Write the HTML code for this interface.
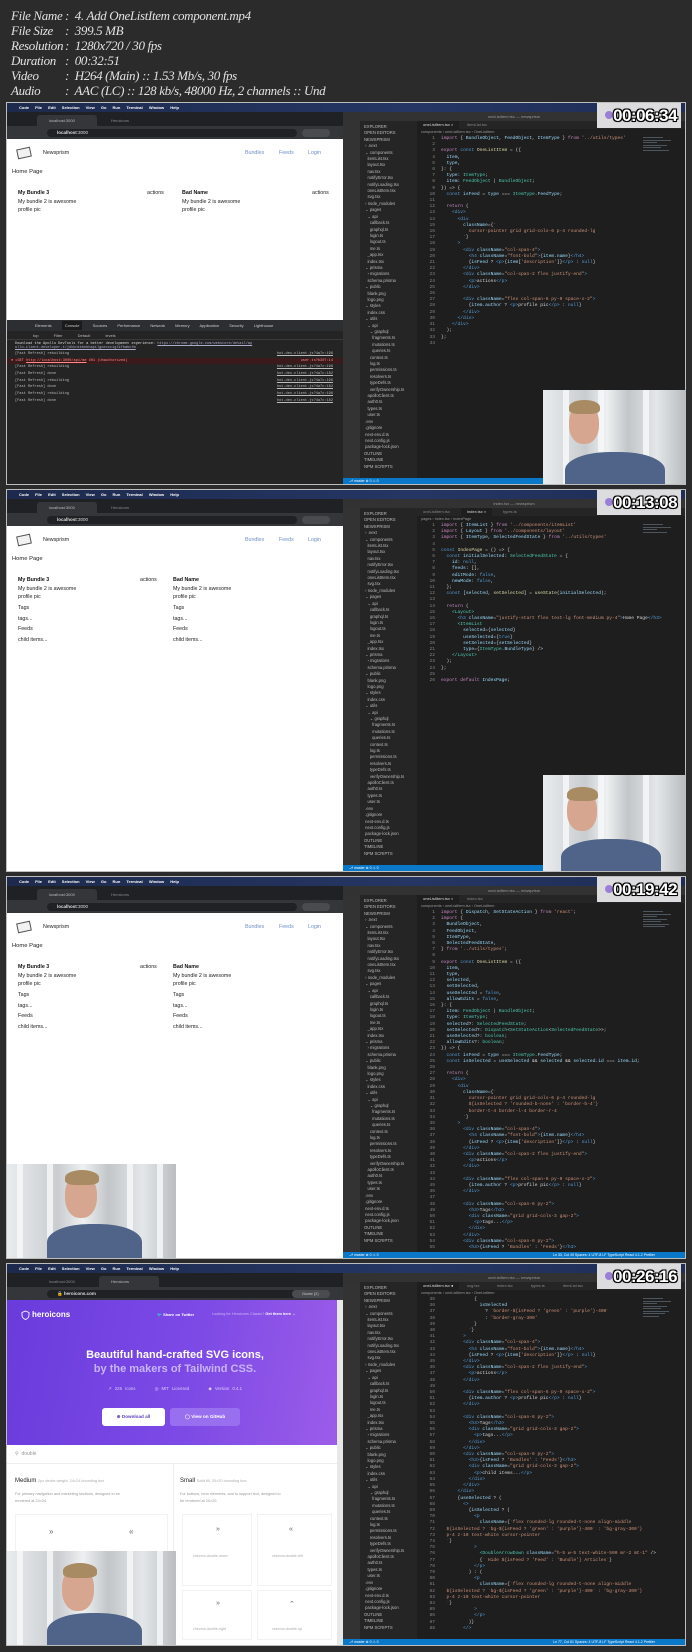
<!DOCTYPE html>
<html><head><meta charset="utf-8">
<style>
*{margin:0;padding:0;box-sizing:border-box}
body{width:692px;height:1652px;background:#2b2b2b;position:relative;overflow:hidden;font-family:"Liberation Sans",sans-serif}
.hdr{position:absolute;left:11px;top:8px;font-family:"Liberation Serif",serif;font-style:italic;color:#e2e2e2;font-size:13px;letter-spacing:-0.35px;line-height:15px}
.hdr div{white-space:pre}
.hdr b{font-weight:normal;display:inline-block;width:54px}
.f{position:absolute;left:7px;width:678px;height:381px;background:#1e1e1e;outline:1px solid #bdbdbd;overflow:hidden}
.a{position:absolute}
.menu{left:0;top:0;width:678px;height:9px;background:linear-gradient(90deg,#1d2a4d,#253664 60%,#1f2d55);color:#fff;font-size:4px;line-height:9px;padding-left:12px;word-spacing:5px;font-weight:bold}
.tabs{left:0;top:9px;width:336px;height:14px;background:#202124}
.tab{top:3px;height:11px;background:#35363a;border-radius:3px 3px 0 0;color:#bbb;font-size:4px;line-height:11px;padding-left:12px}
.addr{left:0;top:23px;width:336px;height:13px;background:#35363a}
.url{left:40px;top:3px;width:250px;height:8px;border-radius:4px;background:#202124;color:#ddd;font-size:4.5px;line-height:8px;padding-left:10px}
.page{left:0;top:36px;width:336px;height:345px;background:#fff;overflow:hidden}
.vs{left:336px;top:9px;width:342px;height:372px;background:#1e1e1e;overflow:hidden}
.vtitle{left:0;top:0;width:342px;height:9px;background:#323233;color:#999;font-size:4px;line-height:9px;text-align:center}
.dots{left:4px;top:3px;width:20px;height:4px}
.dots i{display:inline-block;width:4px;height:4px;border-radius:2px;margin-right:2px}
.act{left:0;top:9px;width:17px;height:363px;background:#333}
.side{left:17px;top:9px;width:57px;height:363px;background:#252526;color:#bbb;font-size:4.2px;line-height:6.4px;padding:3px 0 0 4px;white-space:pre;font-family:"Liberation Sans",sans-serif}
.etabs{left:74px;top:9px;width:268px;height:8px;background:#252526}
.etab{top:0;height:8px;background:#1e1e1e;color:#ddd;font-size:4px;line-height:8px;padding:0 6px}
.crumb{left:74px;top:18px;color:#999;font-size:3.8px;padding-left:4px}
.code{left:80px;top:24px;font-family:"Liberation Mono",monospace;font-size:4.6px;line-height:6.2px;color:#d4d4d4;white-space:pre}
.code .n{color:#858585;display:inline-block;width:12px;text-align:right;margin-right:6px}
.k{color:#569cd6}.s{color:#ce9178}.v{color:#9cdcfe}.t{color:#4ec9b0}.p{color:#c586c0}.y{color:#dcdcaa}
.mini{left:300px;top:24px;width:34px;height:40px}
.mini i{display:block;height:1.3px;margin:1.2px 0;background:#6c7a8a;opacity:.6}
.status{left:0;bottom:0;width:342px;height:6px;background:#0a78c8;color:#fff;font-size:3.5px;line-height:6px;padding-left:6px}
.logo{left:590px;top:0;width:84px;height:25px;background:#dcdcdf}
.logo i{position:absolute;left:8px;top:8px;width:8px;height:8px;border-radius:4px;background:#9b7fd6}
.ts{left:606px;top:3px;font-size:17px;font-weight:bold;color:#fff;letter-spacing:-.5px;text-shadow:-1px -1px 0 #000,1px -1px 0 #000,-1px 1px 0 #000,1px 1px 0 #000,0 0 2px #000}
.cam{overflow:hidden;background:linear-gradient(90deg,#e9ecee,#c9cdd0 30%,#eef0f1 45%,#c2c6c9 60%,#e4e7e9 80%,#b9bdc0)}
.cam .w{position:absolute;top:0;width:6px;height:100%;background:#f8f9fa;opacity:.8}
.cam .body{position:absolute;border-radius:45% 45% 0 0;background:#4f6488}
.cam .head{position:absolute;border-radius:45%;background:#d6a690}
.cam .hair{position:absolute;border-radius:50% 50% 30% 30%;background:#a88b62}
.np{font-size:5.3px;color:#222;line-height:8.6px}
.np b{color:#111}
</style></head><body>

<div class="hdr">
<div><b>File Name</b>:  4. Add OneListItem component.mp4</div>
<div><b>File Size</b>:  399.5 MB</div>
<div><b>Resolution</b>:  1280x720 / 30 fps</div>
<div><b>Duration</b>:  00:32:51</div>
<div><b>Video</b>:  H264 (Main) :: 1.53 Mb/s, 30 fps</div>
<div><b>Audio</b>:  AAC (LC) :: 128 kb/s, 48000 Hz, 2 channels :: Und</div>
</div>

<!-- FRAME 1 -->
<div class="f" style="top:103px">
 <div class="a menu"> Code  File  Edit  Selection  View  Go  Run  Terminal  Window  Help</div>
 <div class="a tabs"><div class="a tab" style="left:30px;width:60px">localhost:3000</div><div class="a tab" style="left:92px;width:60px;background:none;color:#888">Heroicons</div></div>
 <div class="a addr"><div class="a url"><b>localhost</b>:3000</div><div class="a" style="left:295px;top:3px;width:28px;height:8px;border-radius:4px;background:#4a4b4f"></div></div>
 <div class="a page np">
  <div class="a" style="left:10px;top:9px;width:14px;height:10px;border:1px solid #555;transform:rotate(-12deg);background:#f2f2f2"></div>
  <div class="a" style="left:36px;top:10px">Newsprism</div>
  <div class="a" style="left:238px;top:10px;color:#6e8fc4">Bundles</div>
  <div class="a" style="left:272px;top:10px;color:#6e8fc4">Feeds</div>
  <div class="a" style="left:301px;top:10px;color:#6e8fc4">Login</div>
  <div class="a" style="left:5px;top:29px;font-size:5.8px">Home Page</div>
  <div class="a" style="left:11px;top:50px"><b>My Bundle 3</b><br>My bundle 2 is awesome<br>profile pic</div>
  <div class="a" style="left:140px;top:50px">actions</div>
  <div class="a" style="left:175px;top:50px"><b>Bad Name</b><br>My bundle 2 is awesome<br>profile pic</div>
  <div class="a" style="left:305px;top:50px">actions</div>
  <div class="a" style="left:0;top:181px;width:336px;height:164px;background:#242424;font-family:'Liberation Mono',monospace;font-size:3.6px;color:#bbb;line-height:6.7px">
   <div style="height:11px;background:#2d2e31;color:#ccc;font-family:'Liberation Sans';font-size:4px;line-height:11px;padding-left:28px;word-spacing:9px">Elements <span style="background:#1b1b1b;padding:2px 3px">Console</span> Sources Performance Network Memory Application Security Lighthouse</div>
   <div style="height:9px;border-bottom:1px solid #3a3a3a;font-family:'Liberation Sans';font-size:4px;line-height:9px;padding-left:26px;word-spacing:14px">top Filter Default levels</div>
   <div style="padding-left:8px;line-height:4.4px;padding-top:2px;color:#ddd">Download the Apollo DevTools for a better development experience: <u style="color:#aac">https://chrome.google.com/webstore/detail/ap</u><br><u style="color:#aac">ollo-client-developer-t/jdkknkkbebbapilgoeccciglkfbmbnfm</u></div>
   <div style="padding-left:8px">[Fast Refresh] rebuilding<span style="float:right;margin-right:10px;text-decoration:underline">hot-dev-client.js?4a7c:196</span></div>
   <div style="padding-left:4px;background:#3a1a1a;color:#f88">● ▸GET <u>http://localhost:3000/api/me</u> 401 (Unauthorized)<span style="float:right;margin-right:10px">user.ts?b307:14</span></div>
   <div style="padding-left:8px">[Fast Refresh] rebuilding<span style="float:right;margin-right:10px;text-decoration:underline">hot-dev-client.js?4a7c:196</span></div>
   <div style="padding-left:8px">[Fast Refresh] done<span style="float:right;margin-right:10px;text-decoration:underline">hot-dev-client.js?4a7c:182</span></div>
   <div style="padding-left:8px">[Fast Refresh] rebuilding<span style="float:right;margin-right:10px;text-decoration:underline">hot-dev-client.js?4a7c:196</span></div>
   <div style="padding-left:8px">[Fast Refresh] done<span style="float:right;margin-right:10px;text-decoration:underline">hot-dev-client.js?4a7c:182</span></div>
   <div style="padding-left:8px">[Fast Refresh] rebuilding<span style="float:right;margin-right:10px;text-decoration:underline">hot-dev-client.js?4a7c:196</span></div>
   <div style="padding-left:8px">[Fast Refresh] done<span style="float:right;margin-right:10px;text-decoration:underline">hot-dev-client.js?4a7c:182</span></div>
  </div>
 </div>
 <div class="a vs">
  <div class="a vtitle">oneListItem.tsx — newsprism</div>
  <div class="a dots"><i style="background:#ff5f57"></i><i style="background:#febc2e"></i><i style="background:#28c840"></i></div>
  <div class="a act"></div>
  <div class="a side">EXPLORER
OPEN EDITORS
NEWSPRISM
 › .next
 ⌄ components
   itemList.tsx
   layout.tsx
   nav.tsx
   notifyError.tsx
   notifyLoading.tsx
   oneListItem.tsx
   svg.tsx
 › node_modules
 ⌄ pages
   ⌄ api
     callback.ts
     graphql.ts
     login.ts
     logout.ts
     me.ts
   _app.tsx
   index.tsx
 ⌄ prisma
   › migrations
   schema.prisma
 ⌄ public
   blank.png
   logo.png
 ⌄ styles
   index.css
 ⌄ utils
   ⌄ api
     ⌄ graphql
       fragments.ts
       mutations.ts
       queries.ts
     context.ts
     log.ts
     permissions.ts
     resolvers.ts
     typeDefs.ts
     verifyOwnership.ts
   apolloClient.ts
   auth0.ts
   types.ts
   user.ts
 .env
 .gitignore
 next-env.d.ts
 next.config.js
 package-lock.json
OUTLINE
TIMELINE
NPM SCRIPTS</div>
  <div class="a etabs"><div class="a etab" style="left:0">oneListItem.tsx ×</div><div class="a etab" style="left:44px;background:none;color:#888">itemList.tsx</div></div>
  <div class="a crumb">components › oneListItem.tsx › OneListItem</div>
  <div class="a code"><span class="n">1</span><span class="p">import</span> { <span class="v">BundleObject</span>, <span class="v">FeedObject</span>, <span class="v">ItemType</span> } <span class="p">from</span> <span class="s">'../utils/types'</span>
<span class="n">2</span>
<span class="n">3</span><span class="p">export</span> <span class="k">const</span> <span class="y">OneListItem</span> = ({
<span class="n">4</span>  <span class="v">item</span>,
<span class="n">5</span>  <span class="v">type</span>,
<span class="n">6</span>}: {
<span class="n">7</span>  <span class="v">type</span>: <span class="t">ItemType</span>;
<span class="n">8</span>  <span class="v">item</span>: <span class="t">FeedObject</span> | <span class="t">BundleObject</span>;
<span class="n">9</span>}) =&gt; {
<span class="n">10</span>  <span class="k">const</span> <span class="v">isFeed</span> = <span class="v">type</span> === <span class="t">ItemType</span>.<span class="v">FeedType</span>;
<span class="n">11</span>
<span class="n">12</span>  <span class="p">return</span> (
<span class="n">13</span>    <span class="k">&lt;div&gt;</span>
<span class="n">14</span>      <span class="k">&lt;div</span>
<span class="n">15</span>        <span class="v">className</span>={`
<span class="n">16</span>          <span class="s">cursor-pointer grid grid-cols-6 p-4 rounded-lg</span>
<span class="n">17</span>        `}
<span class="n">18</span>      <span class="k">&gt;</span>
<span class="n">19</span>        <span class="k">&lt;div</span> <span class="v">className</span>=<span class="s">"col-span-4"</span><span class="k">&gt;</span>
<span class="n">20</span>          <span class="k">&lt;h4</span> <span class="v">className</span>=<span class="s">"font-bold"</span><span class="k">&gt;</span>{<span class="v">item</span>.<span class="v">name</span>}<span class="k">&lt;/h4&gt;</span>
<span class="n">21</span>          {<span class="v">isFeed</span> ? <span class="k">&lt;p&gt;</span>{<span class="v">item</span>[<span class="s">'description'</span>]}<span class="k">&lt;/p&gt;</span> : <span class="k">null</span>}
<span class="n">22</span>        <span class="k">&lt;/div&gt;</span>
<span class="n">23</span>        <span class="k">&lt;div</span> <span class="v">className</span>=<span class="s">"col-span-2 flex justify-end"</span><span class="k">&gt;</span>
<span class="n">24</span>          <span class="k">&lt;p&gt;</span>actions<span class="k">&lt;/p&gt;</span>
<span class="n">25</span>        <span class="k">&lt;/div&gt;</span>
<span class="n">26</span>
<span class="n">27</span>        <span class="k">&lt;div</span> <span class="v">className</span>=<span class="s">"flex col-span-6 py-0 space-x-2"</span><span class="k">&gt;</span>
<span class="n">28</span>          {<span class="v">item</span>.<span class="v">author</span> ? <span class="k">&lt;p&gt;</span>profile pic<span class="k">&lt;/p&gt;</span> : <span class="k">null</span>}
<span class="n">29</span>        <span class="k">&lt;/div&gt;</span>
<span class="n">30</span>      <span class="k">&lt;/div&gt;</span>
<span class="n">31</span>    <span class="k">&lt;/div&gt;</span>
<span class="n">32</span>  );
<span class="n">33</span>};
<span class="n">34</span></div>
  <div class="a mini"><i style="width:20px"></i><i style="width:28px"></i><i style="width:14px"></i><i style="width:24px"></i><i style="width:18px"></i><i style="width:26px"></i></div>
  <div class="a status">⎇ master  ⊗ 0 ⚠ 0</div>
 </div>
 <div class="a cam" style="left:536px;top:287px;width:142px;height:94px">
  <div class="w" style="left:20px"></div><div class="w" style="left:55px"></div><div class="w" style="left:100px"></div>
  <div class="body" style="left:22px;top:62px;width:100px;height:40px"></div>
  <div class="head" style="left:26px;top:14px;width:30px;height:40px"></div>
  <div class="hair" style="left:26px;top:10px;width:31px;height:14px"></div>
 </div>
 <div class="a logo"><i></i></div>
 <div class="a ts">00:06:34</div>
</div>

<!-- FRAME 2 -->
<div class="f" style="top:490px">
 <div class="a menu"> Code  File  Edit  Selection  View  Go  Run  Terminal  Window  Help</div>
 <div class="a tabs"><div class="a tab" style="left:30px;width:60px">localhost:3000</div><div class="a tab" style="left:92px;width:60px;background:none;color:#888">Heroicons</div></div>
 <div class="a addr"><div class="a url"><b>localhost</b>:3000</div><div class="a" style="left:295px;top:3px;width:28px;height:8px;border-radius:4px;background:#4a4b4f"></div></div>
 <div class="a page np">
  <div class="a" style="left:10px;top:9px;width:14px;height:10px;border:1px solid #555;transform:rotate(-12deg);background:#f2f2f2"></div>
  <div class="a" style="left:36px;top:10px">Newsprism</div>
  <div class="a" style="left:238px;top:10px;color:#6e8fc4">Bundles</div>
  <div class="a" style="left:272px;top:10px;color:#6e8fc4">Feeds</div>
  <div class="a" style="left:301px;top:10px;color:#6e8fc4">Login</div>
  <div class="a" style="left:5px;top:29px;font-size:5.8px">Home Page</div>
  <div class="a" style="left:11px;top:50px"><b>My Bundle 3</b><br>My bundle 2 is awesome<br>profile pic<br><span style="line-height:13px">Tags</span><br>tags...<br><span style="line-height:13px">Feeds</span><br>child items...</div>
  <div class="a" style="left:133px;top:50px">actions</div>
  <div class="a" style="left:166px;top:50px"><b>Bad Name</b><br>My bundle 2 is awesome<br>profile pic<br><span style="line-height:13px">Tags</span><br>tags...<br><span style="line-height:13px">Feeds</span><br>child items...</div>
 </div>
 <div class="a vs">
  <div class="a vtitle">index.tsx — newsprism</div>
  <div class="a dots"><i style="background:#ff5f57"></i><i style="background:#febc2e"></i><i style="background:#28c840"></i></div>
  <div class="a act"></div>
  <div class="a side">EXPLORER
OPEN EDITORS
NEWSPRISM
 › .next
 ⌄ components
   itemList.tsx
   layout.tsx
   nav.tsx
   notifyError.tsx
   notifyLoading.tsx
   oneListItem.tsx
   svg.tsx
 › node_modules
 ⌄ pages
   ⌄ api
     callback.ts
     graphql.ts
     login.ts
     logout.ts
     me.ts
   _app.tsx
   index.tsx
 ⌄ prisma
   › migrations
   schema.prisma
 ⌄ public
   blank.png
   logo.png
 ⌄ styles
   index.css
 ⌄ utils
   ⌄ api
     ⌄ graphql
       fragments.ts
       mutations.ts
       queries.ts
     context.ts
     log.ts
     permissions.ts
     resolvers.ts
     typeDefs.ts
     verifyOwnership.ts
   apolloClient.ts
   auth0.ts
   types.ts
   user.ts
 .env
 .gitignore
 next-env.d.ts
 next.config.js
 package-lock.json
OUTLINE
TIMELINE
NPM SCRIPTS</div>
  <div class="a etabs"><div class="a etab" style="left:0;background:none;color:#888">oneListItem.tsx</div><div class="a etab" style="left:44px">index.tsx ×</div><div class="a etab" style="left:80px;background:none;color:#888">types.ts</div></div>
  <div class="a crumb">pages › index.tsx › IndexPage</div>
  <div class="a code"><span class="n">1</span><span class="p">import</span> { <span class="v">ItemList</span> } <span class="p">from</span> <span class="s">'../components/itemList'</span>
<span class="n">2</span><span class="p">import</span> { <span class="v">Layout</span> } <span class="p">from</span> <span class="s">'../components/layout'</span>
<span class="n">3</span><span class="p">import</span> { <span class="v">ItemType</span>, <span class="v">SelectedFeedState</span> } <span class="p">from</span> <span class="s">'../utils/types'</span>
<span class="n">4</span>
<span class="n">5</span><span class="k">const</span> <span class="y">IndexPage</span> = () =&gt; {
<span class="n">6</span>  <span class="k">const</span> <span class="v">initialSelected</span>: <span class="t">SelectedFeedState</span> = {
<span class="n">7</span>    <span class="v">id</span>: <span class="k">null</span>,
<span class="n">8</span>    <span class="v">feeds</span>: [],
<span class="n">9</span>    <span class="v">editMode</span>: <span class="k">false</span>,
<span class="n">10</span>    <span class="v">newMode</span>: <span class="k">false</span>,
<span class="n">11</span>  };
<span class="n">12</span>  <span class="k">const</span> [<span class="v">selected</span>, <span class="y">setSelected</span>] = <span class="y">useState</span>(<span class="v">initialSelected</span>);
<span class="n">13</span>
<span class="n">14</span>  <span class="p">return</span> (
<span class="n">15</span>    <span class="t">&lt;Layout&gt;</span>
<span class="n">16</span>      <span class="k">&lt;h3</span> <span class="v">className</span>=<span class="s">"justify-start flex text-lg font-medium py-4"</span><span class="k">&gt;</span>Home Page<span class="k">&lt;/h3&gt;</span>
<span class="n">17</span>      <span class="t">&lt;ItemList</span>
<span class="n">18</span>        <span class="v">selected</span>={<span class="v">selected</span>}
<span class="n">19</span>        <span class="v">useSelected</span>={<span class="k">true</span>}
<span class="n">20</span>        <span class="v">setSelected</span>={<span class="v">setSelected</span>}
<span class="n">21</span>        <span class="v">type</span>={<span class="t">ItemType</span>.<span class="v">BundleType</span>} /&gt;
<span class="n">22</span>    <span class="t">&lt;/Layout&gt;</span>
<span class="n">23</span>  );
<span class="n">24</span>};
<span class="n">25</span>
<span class="n">26</span><span class="p">export default</span> <span class="v">IndexPage</span>;</div>
  <div class="a mini"><i style="width:20px"></i><i style="width:28px"></i><i style="width:14px"></i><i style="width:24px"></i></div>
  <div class="a status">⎇ master  ⊗ 0 ⚠ 0</div>
 </div>
 <div class="a cam" style="left:536px;top:285px;width:142px;height:96px">
  <div class="w" style="left:20px"></div><div class="w" style="left:55px"></div><div class="w" style="left:100px"></div>
  <div class="body" style="left:18px;top:64px;width:100px;height:40px"></div>
  <div class="head" style="left:24px;top:16px;width:30px;height:40px"></div>
  <div class="hair" style="left:24px;top:12px;width:31px;height:14px"></div>
 </div>
 <div class="a logo"><i></i></div>
 <div class="a ts">00:13:08</div>
</div>

<!-- FRAME 3 -->
<div class="f" style="top:877px">
 <div class="a menu"> Code  File  Edit  Selection  View  Go  Run  Terminal  Window  Help</div>
 <div class="a tabs"><div class="a tab" style="left:30px;width:60px">localhost:3000</div><div class="a tab" style="left:92px;width:60px;background:none;color:#888">Heroicons</div></div>
 <div class="a addr"><div class="a url"><b>localhost</b>:3000</div><div class="a" style="left:295px;top:3px;width:28px;height:8px;border-radius:4px;background:#4a4b4f"></div></div>
 <div class="a page np">
  <div class="a" style="left:10px;top:9px;width:14px;height:10px;border:1px solid #555;transform:rotate(-12deg);background:#f2f2f2"></div>
  <div class="a" style="left:36px;top:10px">Newsprism</div>
  <div class="a" style="left:238px;top:10px;color:#6e8fc4">Bundles</div>
  <div class="a" style="left:272px;top:10px;color:#6e8fc4">Feeds</div>
  <div class="a" style="left:301px;top:10px;color:#6e8fc4">Login</div>
  <div class="a" style="left:5px;top:29px;font-size:5.8px">Home Page</div>
  <div class="a" style="left:11px;top:50px"><b>My Bundle 3</b><br>My bundle 2 is awesome<br>profile pic<br><span style="line-height:13px">Tags</span><br>tags...<br><span style="line-height:13px">Feeds</span><br>child items...</div>
  <div class="a" style="left:133px;top:50px">actions</div>
  <div class="a" style="left:166px;top:50px"><b>Bad Name</b><br>My bundle 2 is awesome<br>profile pic<br><span style="line-height:13px">Tags</span><br>tags...<br><span style="line-height:13px">Feeds</span><br>child items...</div>
 </div>
 <div class="a vs">
  <div class="a vtitle">oneListItem.tsx — newsprism</div>
  <div class="a dots"><i style="background:#ff5f57"></i><i style="background:#febc2e"></i><i style="background:#28c840"></i></div>
  <div class="a act"></div>
  <div class="a side">EXPLORER
OPEN EDITORS
NEWSPRISM
 › .next
 ⌄ components
   itemList.tsx
   layout.tsx
   nav.tsx
   notifyError.tsx
   notifyLoading.tsx
   oneListItem.tsx
   svg.tsx
 › node_modules
 ⌄ pages
   ⌄ api
     callback.ts
     graphql.ts
     login.ts
     logout.ts
     me.ts
   _app.tsx
   index.tsx
 ⌄ prisma
   › migrations
   schema.prisma
 ⌄ public
   blank.png
   logo.png
 ⌄ styles
   index.css
 ⌄ utils
   ⌄ api
     ⌄ graphql
       fragments.ts
       mutations.ts
       queries.ts
     context.ts
     log.ts
     permissions.ts
     resolvers.ts
     typeDefs.ts
     verifyOwnership.ts
   apolloClient.ts
   auth0.ts
   types.ts
   user.ts
 .env
 .gitignore
 next-env.d.ts
 next.config.js
 package-lock.json
OUTLINE
TIMELINE
NPM SCRIPTS</div>
  <div class="a etabs"><div class="a etab" style="left:0">oneListItem.tsx ×</div><div class="a etab" style="left:44px;background:none;color:#888">index.tsx</div></div>
  <div class="a crumb">components › oneListItem.tsx › OneListItem</div>
  <div class="a code"><span class="n">1</span><span class="p">import</span> { <span class="v">Dispatch</span>, <span class="v">SetStateAction</span> } <span class="p">from</span> <span class="s">'react'</span>;
<span class="n">2</span><span class="p">import</span> {
<span class="n">3</span>  <span class="v">BundleObject</span>,
<span class="n">4</span>  <span class="v">FeedObject</span>,
<span class="n">5</span>  <span class="v">ItemType</span>,
<span class="n">6</span>  <span class="v">SelectedFeedState</span>,
<span class="n">7</span>} <span class="p">from</span> <span class="s">'../utils/types'</span>;
<span class="n">8</span>
<span class="n">9</span><span class="p">export</span> <span class="k">const</span> <span class="y">OneListItem</span> = ({
<span class="n">10</span>  <span class="v">item</span>,
<span class="n">11</span>  <span class="v">type</span>,
<span class="n">12</span>  <span class="v">selected</span>,
<span class="n">13</span>  <span class="v">setSelected</span>,
<span class="n">14</span>  <span class="v">useSelected</span> = <span class="k">false</span>,
<span class="n">15</span>  <span class="v">allowEdits</span> = <span class="k">false</span>,
<span class="n">16</span>}: {
<span class="n">17</span>  <span class="v">item</span>: <span class="t">FeedObject</span> | <span class="t">BundleObject</span>;
<span class="n">18</span>  <span class="v">type</span>: <span class="t">ItemType</span>;
<span class="n">19</span>  <span class="v">selected</span>?: <span class="t">SelectedFeedState</span>;
<span class="n">20</span>  <span class="v">setSelected</span>?: <span class="t">Dispatch</span>&lt;<span class="t">SetStateAction</span>&lt;<span class="t">SelectedFeedState</span>&gt;&gt;;
<span class="n">21</span>  <span class="v">useSelected</span>?: <span class="t">boolean</span>;
<span class="n">22</span>  <span class="v">allowEdits</span>?: <span class="t">boolean</span>;
<span class="n">23</span>}) =&gt; {
<span class="n">24</span>  <span class="k">const</span> <span class="v">isFeed</span> = <span class="v">type</span> === <span class="t">ItemType</span>.<span class="v">FeedType</span>;
<span class="n">25</span>  <span class="k">const</span> <span class="v">isSelected</span> = <span class="v">useSelected</span> &amp;&amp; <span class="v">selected</span> &amp;&amp; <span class="v">selected</span>.<span class="v">id</span> === <span class="v">item</span>.<span class="v">id</span>;
<span class="n">26</span>
<span class="n">27</span>  <span class="p">return</span> (
<span class="n">28</span>    <span class="k">&lt;div&gt;</span>
<span class="n">29</span>      <span class="k">&lt;div</span>
<span class="n">30</span>        <span class="v">className</span>={`
<span class="n">31</span>          <span class="s">cursor-pointer grid grid-cols-6 p-4 rounded-lg</span>
<span class="n">32</span>          <span class="s">${isSelected ? 'rounded-b-none' : 'border-b-4'}</span>
<span class="n">33</span>          <span class="s">border-t-4 border-l-4 border-r-4</span>
<span class="n">34</span>        `}
<span class="n">35</span>      <span class="k">&gt;</span>
<span class="n">36</span>        <span class="k">&lt;div</span> <span class="v">className</span>=<span class="s">"col-span-4"</span><span class="k">&gt;</span>
<span class="n">37</span>          <span class="k">&lt;h4</span> <span class="v">className</span>=<span class="s">"font-bold"</span><span class="k">&gt;</span>{<span class="v">item</span>.<span class="v">name</span>}<span class="k">&lt;/h4&gt;</span>
<span class="n">38</span>          {<span class="v">isFeed</span> ? <span class="k">&lt;p&gt;</span>{<span class="v">item</span>[<span class="s">'description'</span>]}<span class="k">&lt;/p&gt;</span> : <span class="k">null</span>}
<span class="n">39</span>        <span class="k">&lt;/div&gt;</span>
<span class="n">40</span>        <span class="k">&lt;div</span> <span class="v">className</span>=<span class="s">"col-span-2 flex justify-end"</span><span class="k">&gt;</span>
<span class="n">41</span>          <span class="k">&lt;p&gt;</span>actions<span class="k">&lt;/p&gt;</span>
<span class="n">42</span>        <span class="k">&lt;/div&gt;</span>
<span class="n">43</span>
<span class="n">44</span>        <span class="k">&lt;div</span> <span class="v">className</span>=<span class="s">"flex col-span-6 py-0 space-x-2"</span><span class="k">&gt;</span>
<span class="n">45</span>          {<span class="v">item</span>.<span class="v">author</span> ? <span class="k">&lt;p&gt;</span>profile pic<span class="k">&lt;/p&gt;</span> : <span class="k">null</span>}
<span class="n">46</span>        <span class="k">&lt;/div&gt;</span>
<span class="n">47</span>
<span class="n">48</span>        <span class="k">&lt;div</span> <span class="v">className</span>=<span class="s">"col-span-6 py-2"</span><span class="k">&gt;</span>
<span class="n">49</span>          <span class="k">&lt;h3&gt;</span>Tags<span class="k">&lt;/h3&gt;</span>
<span class="n">50</span>          <span class="k">&lt;div</span> <span class="v">className</span>=<span class="s">"grid grid-cols-3 gap-2"</span><span class="k">&gt;</span>
<span class="n">51</span>            <span class="k">&lt;p&gt;</span>tags...<span class="k">&lt;/p&gt;</span>
<span class="n">52</span>          <span class="k">&lt;/div&gt;</span>
<span class="n">53</span>        <span class="k">&lt;/div&gt;</span>
<span class="n">54</span>        <span class="k">&lt;div</span> <span class="v">className</span>=<span class="s">"col-span-6 py-2"</span><span class="k">&gt;</span>
<span class="n">55</span>          <span class="k">&lt;h3&gt;</span>{<span class="v">isFeed</span> ? <span class="s">'Bundles'</span> : <span class="s">'Feeds'</span>}<span class="k">&lt;/h3&gt;</span></div>
  <div class="a mini"><i style="width:20px"></i><i style="width:28px"></i><i style="width:14px"></i><i style="width:24px"></i><i style="width:18px"></i><i style="width:26px"></i><i style="width:22px"></i></div>
  <div class="a status">⎇ master  ⊗ 0 ⚠ 0<span style="float:right;margin-right:30px">Ln 33, Col 49  Spaces: 4  UTF-8  LF  TypeScript React  4.1.2  Prettier</span></div>
 </div>
 <div class="a cam" style="left:0;top:287px;width:169px;height:94px">
  <div class="w" style="left:10px"></div><div class="w" style="left:40px"></div><div class="w" style="left:120px"></div><div class="w" style="left:150px"></div>
  <div class="body" style="left:40px;top:60px;width:95px;height:40px"></div>
  <div class="head" style="left:58px;top:10px;width:32px;height:44px"></div>
  <div class="hair" style="left:58px;top:6px;width:34px;height:15px"></div>
 </div>
 <div class="a logo"><i></i></div>
 <div class="a ts">00:19:42</div>
</div>

<!-- FRAME 4 -->
<div class="f" style="top:1264px">
 <div class="a menu"> Code  File  Edit  Selection  View  Go  Run  Terminal  Window  Help</div>
 <div class="a tabs"><div class="a tab" style="left:30px;width:60px;background:none;color:#888">localhost:3000</div><div class="a tab" style="left:92px;width:60px">Heroicons</div></div>
 <div class="a addr"><div class="a url">🔒 <b>heroicons.com</b></div><div class="a" style="left:285px;top:3px;width:38px;height:8px;border-radius:4px;background:#4a4b4f;color:#ccc;font-size:4px;line-height:8px;padding-left:10px">Guest (2)</div></div>
 <div class="a page" style="font-family:'Liberation Sans',sans-serif">
  <div class="a" style="left:0;top:0;width:336px;height:145px;background:linear-gradient(100deg,#6a3bdc,#7d4ae6 55%,#9d5de8)">
   <svg class="a" style="left:14px;top:10px" width="9" height="10" viewBox="0 0 9 10"><path d="M4.5 1 L8 2.5 V5 C8 7.5 6 9 4.5 9.5 C3 9 1 7.5 1 5 V2.5 Z" fill="none" stroke="#fff" stroke-width="0.9"/></svg>
   <div class="a" style="left:25px;top:10px;color:#fff;font-size:8px;font-weight:bold">heroicons</div>
   <div class="a" style="left:150px;top:12px;color:#fff;font-size:4px;font-weight:bold">🐦 Share on Twitter</div>
   <div class="a" style="left:205px;top:12px;color:#c9b8f5;font-size:3.8px">Looking for Heroicons Classic? <b style="color:#fff">Get them here →</b></div>
   <div class="a" style="left:0;width:336px;top:48px;text-align:center;color:#fff;font-size:11px;font-weight:bold;line-height:14px">Beautiful hand-crafted SVG icons,<br><span style="color:#c8b4fa">by the makers of Tailwind CSS.</span></div>
   <div class="a" style="left:0;width:336px;top:86px;text-align:center;color:#dccff9;font-size:4.3px;word-spacing:2px">↗ 226 Icons &nbsp;&nbsp;&nbsp;&nbsp; ◎ MIT Licensed &nbsp;&nbsp;&nbsp;&nbsp; ◆ Version 0.4.1</div>
   <div class="a" style="left:95px;top:108px;width:63px;height:18px;background:#fff;border-radius:3px;color:#5b3dc0;font-size:4.6px;line-height:18px;text-align:center;font-weight:bold">⊕ Download all</div>
   <div class="a" style="left:163px;top:108px;width:70px;height:18px;background:#9870ef;border-radius:3px;color:#fff;font-size:4.6px;line-height:18px;text-align:center;font-weight:bold">◯ View on GitHub</div>
  </div>
  <div class="a" style="left:8px;top:151px;color:#999;font-size:5px">⚲ &nbsp;double</div>
  <div class="a" style="left:0;top:163px;width:336px;height:1px;background:#eee"></div>
  <div class="a" style="left:166px;top:164px;width:1px;height:190px;background:#eee"></div>
  <div class="a" style="left:8px;top:178px;font-size:6px;color:#222">Medium <span style="font-size:3.8px;color:#aaa">2px stroke weight, 24×24 bounding box</span></div>
  <div class="a" style="left:8px;top:191px;font-size:3.8px;color:#999;line-height:7px">For primary navigation and marketing sections, designed to be<br>rendered at 24×24.</div>
  <div class="a" style="left:173px;top:178px;font-size:6px;color:#222">Small <span style="font-size:3.8px;color:#aaa">Solid fill, 20×20 bounding box</span></div>
  <div class="a" style="left:173px;top:191px;font-size:3.8px;color:#999;line-height:7px">For buttons, form elements, and to support text, designed to<br>be rendered at 20×20.</div>
  <div class="a" style="left:8px;top:214px;width:153px;height:40px;border:1px solid #f2f2f2"></div>
  <div class="a" style="left:42px;top:227px;color:#666;font-size:8px">»</div>
  <div class="a" style="left:122px;top:227px;color:#666;font-size:8px">«</div>
  <div class="a" style="left:175px;top:214px;width:70px;height:72px;border:1px solid #f2f2f2"></div>
  <div class="a" style="left:250px;top:214px;width:75px;height:72px;border:1px solid #f2f2f2"></div>
  <div class="a" style="left:209px;top:226px;color:#666;font-size:7px">»</div>
  <div class="a" style="left:282px;top:226px;color:#666;font-size:7px">«</div>
  <div class="a" style="left:186px;top:254px;color:#aaa;font-size:3.6px">chevron-double-down</div>
  <div class="a" style="left:265px;top:254px;color:#aaa;font-size:3.6px">chevron-double-left</div>
  <div class="a" style="left:175px;top:290px;width:70px;height:50px;border:1px solid #f2f2f2"></div>
  <div class="a" style="left:250px;top:290px;width:75px;height:50px;border:1px solid #f2f2f2"></div>
  <div class="a" style="left:209px;top:300px;color:#666;font-size:7px">»</div>
  <div class="a" style="left:282px;top:300px;color:#666;font-size:7px">⌃</div>
  <div class="a" style="left:186px;top:327px;color:#aaa;font-size:3.6px">chevron-double-right</div>
  <div class="a" style="left:265px;top:327px;color:#aaa;font-size:3.6px">chevron-double-up</div>
  <div class="a" style="left:330px;top:0;width:6px;height:345px;background:#e8e8e8"></div>
 </div>
 <div class="a vs">
  <div class="a vtitle">oneListItem.tsx — newsprism</div>
  <div class="a dots"><i style="background:#ff5f57"></i><i style="background:#febc2e"></i><i style="background:#28c840"></i></div>
  <div class="a act"></div>
  <div class="a side">EXPLORER
OPEN EDITORS
NEWSPRISM
 › .next
 ⌄ components
   itemList.tsx
   layout.tsx
   nav.tsx
   notifyError.tsx
   notifyLoading.tsx
   oneListItem.tsx
   svg.tsx
 › node_modules
 ⌄ pages
   ⌄ api
     callback.ts
     graphql.ts
     login.ts
     logout.ts
     me.ts
   _app.tsx
   index.tsx
 ⌄ prisma
   › migrations
   schema.prisma
 ⌄ public
   blank.png
   logo.png
 ⌄ styles
   index.css
 ⌄ utils
   ⌄ api
     ⌄ graphql
       fragments.ts
       mutations.ts
       queries.ts
     context.ts
     log.ts
     permissions.ts
     resolvers.ts
     typeDefs.ts
     verifyOwnership.ts
   apolloClient.ts
   auth0.ts
   types.ts
   user.ts
 .env
 .gitignore
 next-env.d.ts
 next.config.js
 package-lock.json
OUTLINE
TIMELINE
NPM SCRIPTS</div>
  <div class="a etabs"><div class="a etab" style="left:0">oneListItem.tsx ●</div><div class="a etab" style="left:44px;background:none;color:#888">svg.tsx</div><div class="a etab" style="left:74px;background:none;color:#888">index.tsx</div><div class="a etab" style="left:108px;background:none;color:#888">types.ts</div><div class="a etab" style="left:140px;background:none;color:#888">itemList.tsx</div></div>
  <div class="a crumb">components › oneListItem.tsx › OneListItem</div>
  <div class="a code"><span class="n">35</span>            {
<span class="n">36</span>              <span class="v">isSelected</span>
<span class="n">37</span>                ? <span class="s">`border-${isFeed ? 'green' : 'purple'}-400`</span>
<span class="n">38</span>                : <span class="s">'border-gray-300'</span>
<span class="n">39</span>            }
<span class="n">40</span>          `}
<span class="n">41</span>        <span class="k">&gt;</span>
<span class="n">42</span>        <span class="k">&lt;div</span> <span class="v">className</span>=<span class="s">"col-span-4"</span><span class="k">&gt;</span>
<span class="n">43</span>          <span class="k">&lt;h4</span> <span class="v">className</span>=<span class="s">"font-bold"</span><span class="k">&gt;</span>{<span class="v">item</span>.<span class="v">name</span>}<span class="k">&lt;/h4&gt;</span>
<span class="n">44</span>          {<span class="v">isFeed</span> ? <span class="k">&lt;p&gt;</span>{<span class="v">item</span>[<span class="s">'description'</span>]}<span class="k">&lt;/p&gt;</span> : <span class="k">null</span>}
<span class="n">45</span>        <span class="k">&lt;/div&gt;</span>
<span class="n">46</span>        <span class="k">&lt;div</span> <span class="v">className</span>=<span class="s">"col-span-2 flex justify-end"</span><span class="k">&gt;</span>
<span class="n">47</span>          <span class="k">&lt;p&gt;</span>actions<span class="k">&lt;/p&gt;</span>
<span class="n">48</span>        <span class="k">&lt;/div&gt;</span>
<span class="n">49</span>
<span class="n">50</span>        <span class="k">&lt;div</span> <span class="v">className</span>=<span class="s">"flex col-span-6 py-0 space-x-2"</span><span class="k">&gt;</span>
<span class="n">51</span>          {<span class="v">item</span>.<span class="v">author</span> ? <span class="k">&lt;p&gt;</span>profile pic<span class="k">&lt;/p&gt;</span> : <span class="k">null</span>}
<span class="n">52</span>        <span class="k">&lt;/div&gt;</span>
<span class="n">53</span>
<span class="n">54</span>        <span class="k">&lt;div</span> <span class="v">className</span>=<span class="s">"col-span-6 py-2"</span><span class="k">&gt;</span>
<span class="n">55</span>          <span class="k">&lt;h3&gt;</span>Tags<span class="k">&lt;/h3&gt;</span>
<span class="n">56</span>          <span class="k">&lt;div</span> <span class="v">className</span>=<span class="s">"grid grid-cols-3 gap-2"</span><span class="k">&gt;</span>
<span class="n">57</span>            <span class="k">&lt;p&gt;</span>tags...<span class="k">&lt;/p&gt;</span>
<span class="n">58</span>          <span class="k">&lt;/div&gt;</span>
<span class="n">59</span>        <span class="k">&lt;/div&gt;</span>
<span class="n">60</span>        <span class="k">&lt;div</span> <span class="v">className</span>=<span class="s">"col-span-6 py-2"</span><span class="k">&gt;</span>
<span class="n">61</span>          <span class="k">&lt;h3&gt;</span>{<span class="v">isFeed</span> ? <span class="s">'Bundles'</span> : <span class="s">'Feeds'</span>}<span class="k">&lt;/h3&gt;</span>
<span class="n">62</span>          <span class="k">&lt;div</span> <span class="v">className</span>=<span class="s">"grid grid-cols-3 gap-2"</span><span class="k">&gt;</span>
<span class="n">63</span>            <span class="k">&lt;p&gt;</span>child items...<span class="k">&lt;/p&gt;</span>
<span class="n">64</span>          <span class="k">&lt;/div&gt;</span>
<span class="n">65</span>        <span class="k">&lt;/div&gt;</span>
<span class="n">66</span>      <span class="k">&lt;/div&gt;</span>
<span class="n">67</span>      {<span class="v">useSelected</span> ? (
<span class="n">68</span>        <span class="k">&lt;&gt;</span>
<span class="n">69</span>          {<span class="v">isSelected</span> ? (
<span class="n">70</span>            <span class="k">&lt;p</span>
<span class="n">71</span>              <span class="v">className</span>={<span class="s">`flex rounded-lg rounded-t-none align-middle</span>
<span class="n">72</span><span class="s">  ${isSelected ? `bg-${isFeed ? 'green' : 'purple'}-400` : 'bg-gray-300'}</span>
<span class="n">73</span><span class="s">  p-4 z-10 text-white cursor-pointer</span>
<span class="n">74</span><span class="s">  `</span>}
<span class="n">75</span>            <span class="k">&gt;</span>
<span class="n">76</span>              <span class="t">&lt;DoubleArrowDown</span> <span class="v">className</span>=<span class="s">"h-5 w-5 text-white-500 mr-2 mt-1"</span> /&gt;
<span class="n">77</span>              {<span class="s">` Hide ${isFeed ? 'Feed' : 'Bundle'} Articles`</span>}
<span class="n">78</span>            <span class="k">&lt;/p&gt;</span>
<span class="n">79</span>          ) : (
<span class="n">80</span>            <span class="k">&lt;p</span>
<span class="n">81</span>              <span class="v">className</span>={<span class="s">`flex rounded-lg rounded-t-none align-middle</span>
<span class="n">82</span><span class="s">  ${isSelected ? `bg-${isFeed ? 'green' : 'purple'}-400` : 'bg-gray-300'}</span>
<span class="n">83</span><span class="s">  p-4 z-10 text-white cursor-pointer</span>
<span class="n">84</span><span class="s">  `</span>}
<span class="n">85</span>            <span class="k">&gt;</span>
<span class="n">86</span>            <span class="k">&lt;/p&gt;</span>
<span class="n">87</span>          )}
<span class="n">88</span>        <span class="k">&lt;/&gt;</span></div>
  <div class="a mini"><i style="width:20px"></i><i style="width:28px"></i><i style="width:14px"></i><i style="width:24px"></i><i style="width:18px"></i><i style="width:26px"></i><i style="width:22px"></i><i style="width:16px"></i></div>
  <div class="a status">⎇ master  ⊗ 0 ⚠ 0<span style="float:right;margin-right:30px">Ln 77, Col 61  Spaces: 4  UTF-8  LF  TypeScript React  4.1.2  Prettier</span></div>
 </div>
 <div class="a cam" style="left:0;top:287px;width:169px;height:94px">
  <div class="w" style="left:10px"></div><div class="w" style="left:40px"></div><div class="w" style="left:120px"></div><div class="w" style="left:150px"></div>
  <div class="body" style="left:40px;top:62px;width:95px;height:40px"></div>
  <div class="head" style="left:55px;top:16px;width:32px;height:44px"></div>
  <div class="hair" style="left:56px;top:12px;width:34px;height:15px"></div>
 </div>
 <div class="a logo"><i></i></div>
 <div class="a ts">00:26:16</div>
</div>
</body></html>
